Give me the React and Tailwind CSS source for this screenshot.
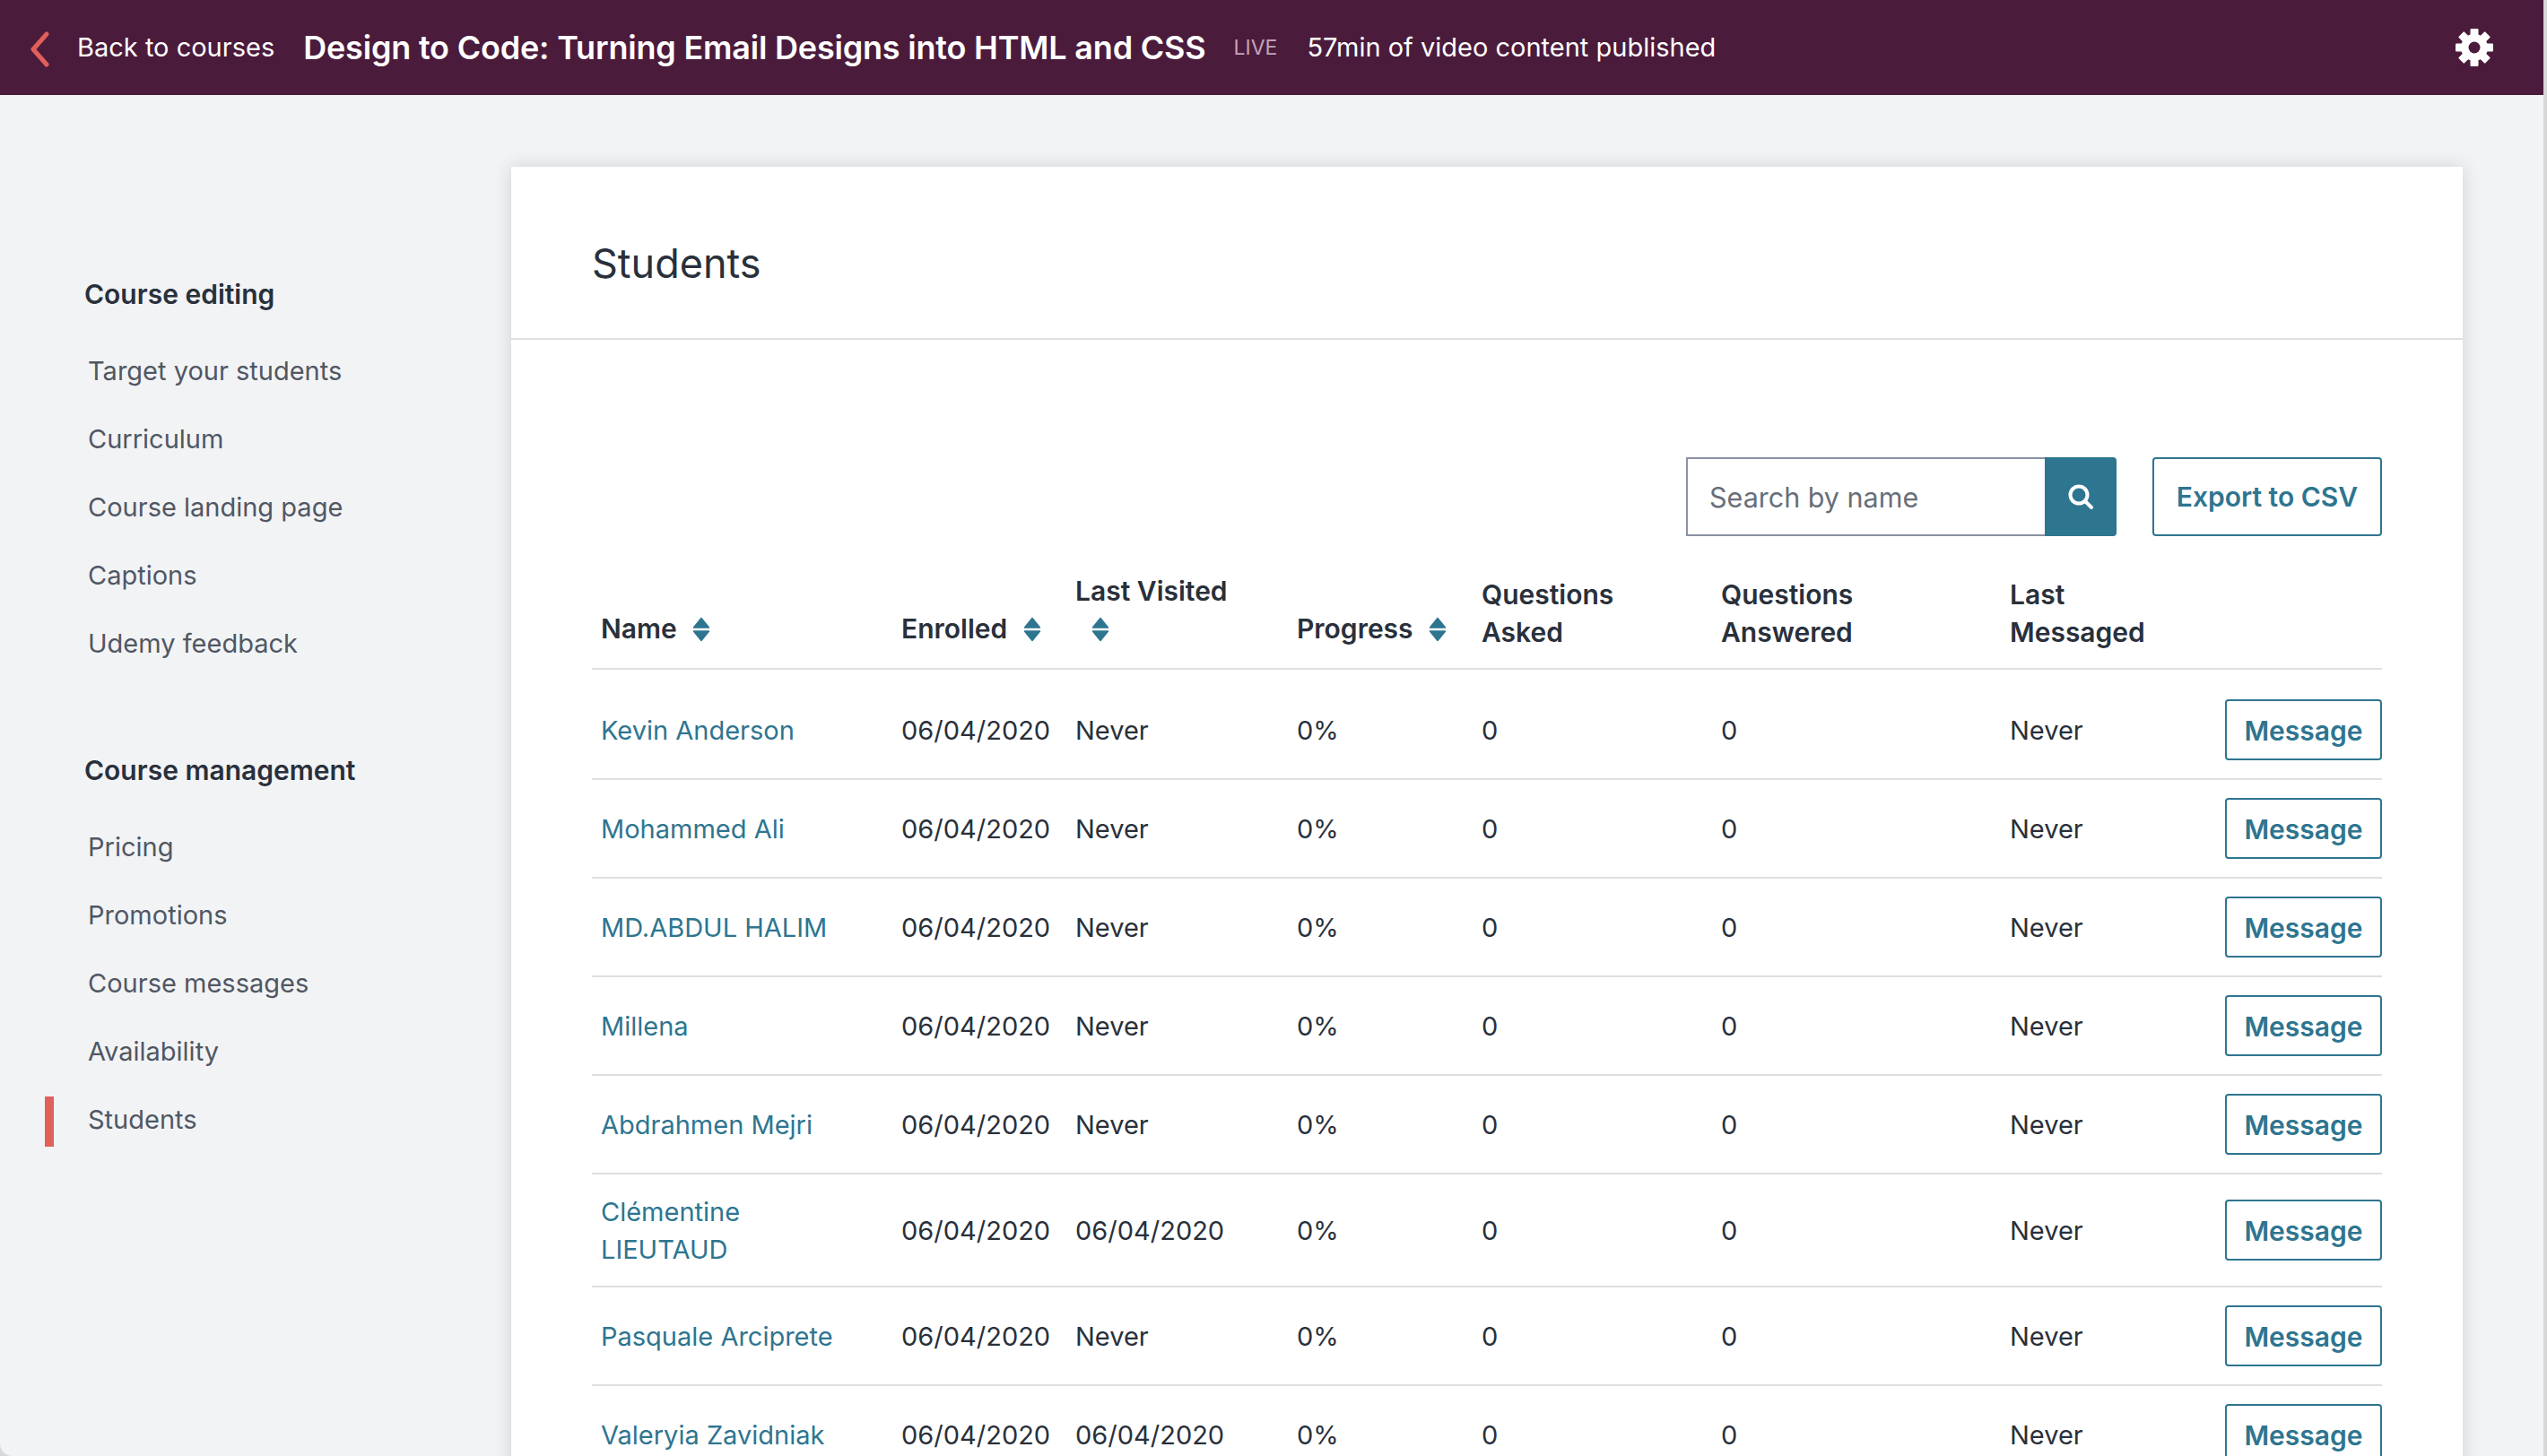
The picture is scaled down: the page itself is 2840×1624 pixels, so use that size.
import React from 'react';

const students = [
  { name: 'Kevin Anderson', visited: 'Never' },
  { name: 'Mohammed Ali', visited: 'Never' },
  { name: 'MD.ABDUL HALIM', visited: 'Never' },
  { name: 'Millena', visited: 'Never' },
  { name: 'Abdrahmen Mejri', visited: 'Never' },
  { name: 'Clémentine LIEUTAUD', visited: '06/04/2020' },
  { name: 'Pasquale Arciprete', visited: 'Never' },
  { name: 'Valeryia Zavidniak', visited: '06/04/2020' },
];

const editingLinks = ['Target your students', 'Curriculum', 'Course landing page', 'Captions', 'Udemy feedback'];
const managementLinks = ['Pricing', 'Promotions', 'Course messages', 'Availability', 'Students'];

const SortIcon = ({ className = '' }) => (
  <svg viewBox="0 0 20 28" className={`inline-block w-[20px] h-[28px] text-[#2e7590] ${className}`} fill="currentColor" stroke="currentColor" strokeWidth="1.5" strokeLinejoin="round">
    <path d="M10 1.5 L18.5 12 H1.5 Z" />
    <path d="M1.5 16 H18.5 L10 26.5 Z" />
  </svg>
);

const GearIcon = () => (
  <svg viewBox="0 0 42 42" className="w-[42px] h-[42px]" fill="#fff">
    {[0, 45, 90, 135].map(a => (
      <rect key={a} x="16.5" y="0" width="9" height="42" rx="1" transform={`rotate(${a} 21 21)`} />
    ))}
    <circle cx="21" cy="21" r="10.5" fill="none" stroke="#fff" strokeWidth="9" />
    <circle cx="21" cy="21" r="6.5" fill="#4b1b3c" />
  </svg>
);

const SideSection = ({ title, links, active }) => (
  <div className="mb-[82px]">
    <h3 className="ml-[94px] text-[30px] leading-[42px] font-semibold text-[#29303b]">{title}</h3>
    <ul className="mt-[27px]">
      {links.map(link => (
        <li key={link} className="pl-[98px] h-[76px] flex items-center text-[29px] text-[#505763] relative">
          {link === active && <span className="absolute left-[50px] top-[12px] w-[10px] h-[56px] bg-[#e0605a]" />}
          {link}
        </li>
      ))}
    </ul>
  </div>
);

const App = () => {
  const pad = i => (i === 0 ? 'pt-[34px] pb-[19px]' : 'pt-[21px] pb-[19px]');
  return (
    <div className="w-[2840px] h-[1624px] overflow-hidden bg-[#d8d8d8]" style={{ fontFamily: 'Inter, "Noto Sans", sans-serif' }}>
      <div className="w-[2836px] h-[1624px] bg-[#f2f3f5] rounded-bl-[14px] overflow-hidden flex flex-col">
        <header className="h-[106px] shrink-0 bg-[#4b1b3c] flex items-center text-white pl-[33px] pr-[56px]">
          <svg viewBox="0 0 22 40" className="w-[22px] h-[40px] mr-[31px] mt-[3px]" fill="none" stroke="#e0605a" strokeWidth="5" strokeLinecap="round" strokeLinejoin="round">
            <path d="M19 3 L4 20 L19 37" />
          </svg>
          <span className="text-[29px] mr-[32px]">Back to courses</span>
          <h1 className="text-[36px] tracking-[-0.2px] font-semibold mr-[31px]">Design to Code: Turning Email Designs into HTML and CSS</h1>
          <span className="text-[23px] text-[#c0a3bb] mr-[33px]">LIVE</span>
          <span className="text-[29px]">57min of video content published</span>
          <span className="ml-auto"><GearIcon /></span>
        </header>

        <div className="flex flex-1 min-h-0">
          <aside className="w-[570px] shrink-0 pt-[201px]">
            <SideSection title="Course editing" links={editingLinks} />
            <SideSection title="Course management" links={managementLinks} active="Students" />
          </aside>

          <main className="w-[2176px] h-[1600px] mt-[80px] bg-white shadow-[0_0_20px_rgba(0,0,0,0.14)]">
            <div className="h-[193px] border-b-2 border-[#dedfe0] pl-[90px] pt-[25px] flex items-center">
              <h2 className="text-[45px] text-[#29303b]">Students</h2>
            </div>

            <div className="px-[90px] pt-[131px]">
              <div className="flex justify-end gap-[40px]">
                <div className="flex w-[480px] h-[88px]">
                  <input placeholder="Search by name" className="flex-1 min-w-0 border-2 border-r-0 border-[#8a92a3] px-[24px] pt-[2px] text-[30.5px] placeholder:text-[#686f7a] outline-none" />
                  <button className="w-[80px] bg-[#2e7590] rounded-r-[4px] flex items-center justify-center">
                    <svg viewBox="0 0 30 30" className="w-[30px] h-[30px]" fill="none" stroke="#fff" strokeWidth="4" strokeLinecap="round">
                      <circle cx="13" cy="13" r="9.5" />
                      <path d="M20 20 L27 27" />
                    </svg>
                  </button>
                </div>
                <button className="w-[256px] h-[88px] border-2 border-[#2e7590] rounded-[4px] text-[#2e7590] text-[30px] font-semibold">Export to CSV</button>
              </div>

              <table className="w-[1996px] table-fixed border-collapse mt-[40px] text-[29px] leading-[42px] text-[#29303b]">
                <colgroup>
                  <col className="w-[335px]" />
                  <col className="w-[194px]" />
                  <col className="w-[247px]" />
                  <col className="w-[206px]" />
                  <col className="w-[267px]" />
                  <col className="w-[322px]" />
                  <col className="w-[425px]" />
                </colgroup>
                <thead>
                  <tr className="border-b-2 border-[#dedfe0] align-bottom text-left text-[30px]">
                    <th className="pl-[10px] pb-[23px] font-semibold">Name <SortIcon className="ml-[10px] align-[-4px]" /></th>
                    <th className="pl-[10px] pb-[23px] font-semibold">Enrolled <SortIcon className="ml-[10px] align-[-4px]" /></th>
                    <th className="pl-[10px] pb-[23px] font-semibold">Last Visited<br /><SortIcon className="ml-[18px] align-[-4px]" /></th>
                    <th className="pl-[10px] pb-[23px] font-semibold">Progress <SortIcon className="ml-[10px] align-[-4px]" /></th>
                    <th className="pl-[10px] pb-[19px] font-semibold">Questions<br />Asked</th>
                    <th className="pl-[10px] pb-[19px] font-semibold">Questions<br />Answered</th>
                    <th className="pl-[10px] pb-[19px] font-semibold">Last<br />Messaged</th>
                  </tr>
                </thead>
                <tbody>
                  {students.map((s, i) => (
                    <tr key={s.name} className="border-b-2 border-[#dedfe0]">
                      <td className={`pl-[10px] pr-[30px] ${pad(i)} text-[#2e7590]`}>{s.name}</td>
                      <td className={`pl-[10px] ${pad(i)}`}>06/04/2020</td>
                      <td className={`pl-[10px] ${pad(i)}`}>{s.visited}</td>
                      <td className={`pl-[10px] ${pad(i)}`}>0%</td>
                      <td className={`pl-[10px] ${pad(i)}`}>0</td>
                      <td className={`pl-[10px] ${pad(i)}`}>0</td>
                      <td className={`pl-[10px] pb-[20px] ${i === 0 ? 'pt-[33px]' : 'pt-[20px]'}`}>
                        <div className="flex items-center justify-between">
                          <span className="pt-[2px]">Never</span>
                          <button className="w-[175px] h-[68px] pt-[2px] border-2 border-[#2e7590] rounded-[4px] text-[#2e7590] text-[30px] font-semibold">Message</button>
                        </div>
                      </td>
                    </tr>
                  ))}
                </tbody>
              </table>
            </div>
          </main>
        </div>
      </div>
    </div>
  );
};

export default App;
